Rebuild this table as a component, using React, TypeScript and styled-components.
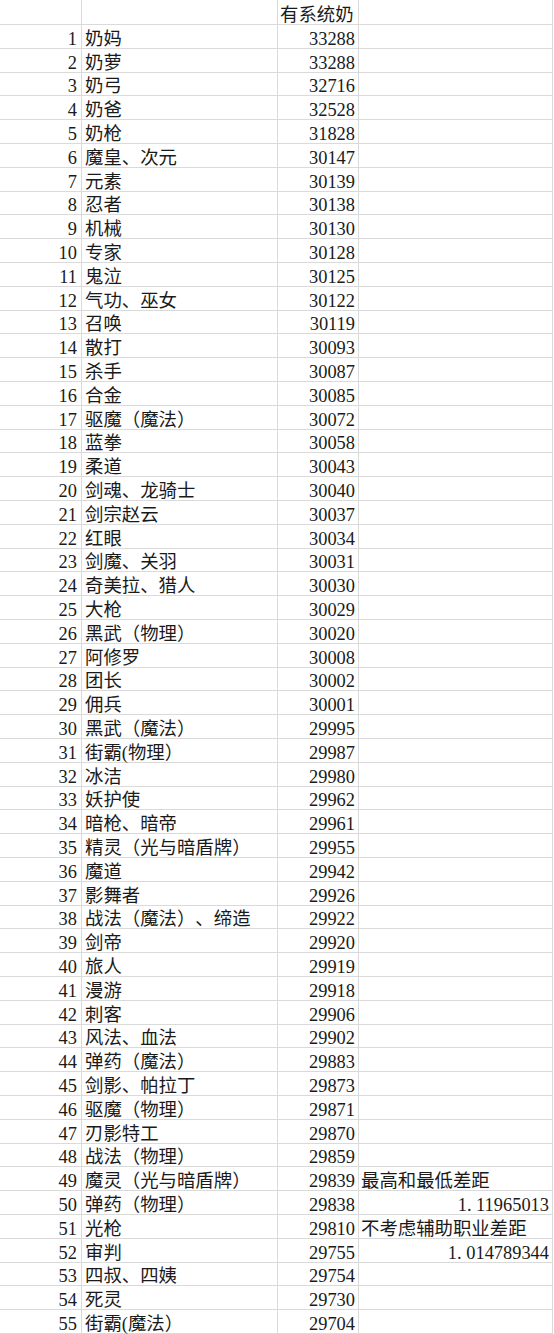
import React from "react";
import styled, { createGlobalStyle } from "styled-components";

const Global = createGlobalStyle`
  html, body { margin: 0; padding: 0; background: #ffffff; }
  body { font-family: "Liberation Serif", "Noto Sans CJK SC", serif; }
`;

const Sheet = styled.div`
  display: grid;
  grid-template-columns: 82px 196px 81px 194px;
  grid-template-rows: 25px repeat(55, 1fr);
  height: 1334px;
  width: 553px;
  color: #1a1a1a;
  font-family: "Liberation Serif", "Noto Sans CJK SC", serif;
  font-size: 18.4px;
  text-spacing-trim: space-all;
`;

const Cell = styled.div<{ $align?: "left" | "right"; $padL?: number; $padR?: number }>`
  display: flex;
  align-items: flex-end;
  justify-content: ${(p) => (p.$align === "right" ? "flex-end" : "flex-start")};
  border-right: 1px solid #dadada;
  border-bottom: 1px solid #dadada;
  padding-left: ${(p) => p.$padL ?? 0}px;
  padding-right: ${(p) => p.$padR ?? 0}px;
  padding-bottom: 0px;
  line-height: 18px;
  white-space: nowrap;
  overflow: visible;
  min-width: 0;
  box-sizing: border-box;
  text-spacing-trim: space-all;
`;

const Dot = styled.span`
  display: inline-block;
  width: 0.5em;
  text-align: left;
`;

const rows: [string, number][] = [
  ["奶妈", 33288],
  ["奶萝", 33288],
  ["奶弓", 32716],
  ["奶爸", 32528],
  ["奶枪", 31828],
  ["魔皇、次元", 30147],
  ["元素", 30139],
  ["忍者", 30138],
  ["机械", 30130],
  ["专家", 30128],
  ["鬼泣", 30125],
  ["气功、巫女", 30122],
  ["召唤", 30119],
  ["散打", 30093],
  ["杀手", 30087],
  ["合金", 30085],
  ["驱魔（魔法）", 30072],
  ["蓝拳", 30058],
  ["柔道", 30043],
  ["剑魂、龙骑士", 30040],
  ["剑宗赵云", 30037],
  ["红眼", 30034],
  ["剑魔、关羽", 30031],
  ["奇美拉、猎人", 30030],
  ["大枪", 30029],
  ["黑武（物理）", 30020],
  ["阿修罗", 30008],
  ["团长", 30002],
  ["佣兵", 30001],
  ["黑武（魔法）", 29995],
  ["街霸(物理）", 29987],
  ["冰洁", 29980],
  ["妖护使", 29962],
  ["暗枪、暗帝", 29961],
  ["精灵（光与暗盾牌）", 29955],
  ["魔道", 29942],
  ["影舞者", 29926],
  ["战法（魔法）、缔造", 29922],
  ["剑帝", 29920],
  ["旅人", 29919],
  ["漫游", 29918],
  ["刺客", 29906],
  ["风法、血法", 29902],
  ["弹药（魔法）", 29883],
  ["剑影、帕拉丁", 29873],
  ["驱魔（物理）", 29871],
  ["刃影特工", 29870],
  ["战法（物理）", 29859],
  ["魔灵（光与暗盾牌）", 29839],
  ["弹药（物理）", 29838],
  ["光枪", 29810],
  ["审判", 29755],
  ["四叔、四姨", 29754],
  ["死灵", 29730],
  ["街霸(魔法）", 29704],
];

type Extra = { text: string; numeric?: boolean };
const extras: Record<number, Extra> = {
  49: { text: "最高和最低差距" },
  50: { text: "1.11965013", numeric: true },
  51: { text: "不考虑辅助职业差距" },
  52: { text: "1.014789344", numeric: true },
};

function Decimal({ value }: { value: string }) {
  const [a, b] = value.split(".");
  return (
    <span>
      {a}
      <Dot>.</Dot>
      {b}
    </span>
  );
}

export default function App() {
  return (
    <>
      <Global />
      <Sheet>
        <Cell />
        <Cell />
        <Cell $padL={2}>有系统奶</Cell>
        <Cell />
        {rows.map(([name, val], i) => {
          const n = i + 1;
          const ex = extras[n];
          return (
            <React.Fragment key={n}>
              <Cell $align="right" $padR={4}>
                {n}
              </Cell>
              <Cell $padL={3}>{name}</Cell>
              <Cell $align="right" $padR={3}>
                {val}
              </Cell>
              {ex ? (
                ex.numeric ? (
                  <Cell $align="right" $padR={3}>
                    <Decimal value={ex.text} />
                  </Cell>
                ) : (
                  <Cell $padL={2}>{ex.text}</Cell>
                )
              ) : (
                <Cell />
              )}
            </React.Fragment>
          );
        })}
      </Sheet>
    </>
  );
}
